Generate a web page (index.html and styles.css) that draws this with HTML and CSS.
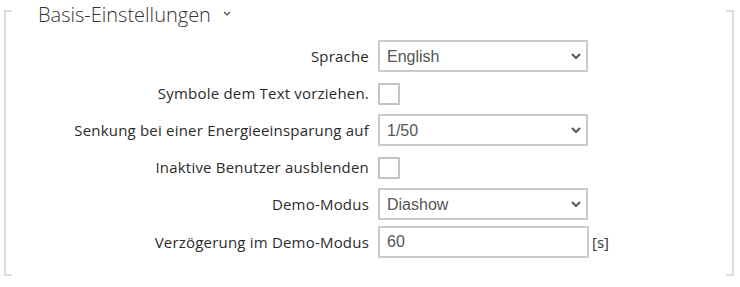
FILE: index.html
```html
<!DOCTYPE html>
<html>

<head>
    <meta charset="utf-8" />
    <title>Basis-Einstellungen</title>
    <link rel="stylesheet" href="styles.css">
</head>

<body>
    <div class="section">
        <h2 class="section-title">
            Basis-Einstellungen
            <svg class="title-chevron" width="8" height="5" viewBox="0 0 8 5">
                <path d="M1 1 L4 4 L7 1" fill="none" stroke="#444" stroke-width="1.2" />
            </svg>
        </h2>

        <div class="form">
            <div class="row">
                <label class="label">Sprache</label>
                <div class="select-wrap">
                    <select class="select">
                        <option>English</option>
                        <option>Deutsch</option>
                    </select>
                    <svg class="select-arrow" width="10" height="6" viewBox="0 0 10 6">
                        <path d="M1 1 L5 5 L9 1" fill="none" stroke="#555" stroke-width="2" />
                    </svg>
                </div>
            </div>
            <div class="row row-check">
                <label class="label">Symbole dem Text vorziehen.</label>
                <input class="check" type="checkbox">
            </div>
            <div class="row">
                <label class="label">Senkung bei einer Energieeinsparung auf</label>
                <div class="select-wrap">
                    <select class="select">
                        <option>1/50</option>
                    </select>
                    <svg class="select-arrow" width="10" height="6" viewBox="0 0 10 6">
                        <path d="M1 1 L5 5 L9 1" fill="none" stroke="#555" stroke-width="2" />
                    </svg>
                </div>
            </div>
            <div class="row row-check">
                <label class="label">Inaktive Benutzer ausblenden</label>
                <input class="check" type="checkbox">
            </div>
            <div class="row">
                <label class="label">Demo-Modus</label>
                <div class="select-wrap">
                    <select class="select">
                        <option>Diashow</option>
                    </select>
                    <svg class="select-arrow" width="10" height="6" viewBox="0 0 10 6">
                        <path d="M1 1 L5 5 L9 1" fill="none" stroke="#555" stroke-width="2" />
                    </svg>
                </div>
            </div>
            <div class="row">
                <label class="label">Verzögerung im Demo-Modus</label>
                <input class="text" type="text" value="60">
                <span class="unit">[s]</span>
            </div>
        </div>
    </div>
</body>

</html>
```

FILE: styles.css
```css
body,
h2 {
    margin: 0;
    padding: 0;
}

body {
    background: #fff;
    font-family: "Open Sans", Lato, sans-serif;
    color: #333;
}

/* bracket frame: side borders plus short ticks at the corners */
.section {
    display: flow-root;
    width: 726px;
    height: 266px;
    margin: 10px 0 0 4px;
    border-left: 2px solid #ddd;
    border-right: 2px solid #ddd;
    background:
        linear-gradient(#ddd, #ddd) left top / 6px 2px no-repeat,
        linear-gradient(#ddd, #ddd) right top / 6px 2px no-repeat,
        linear-gradient(#ddd, #ddd) left bottom / 6px 2px no-repeat,
        linear-gradient(#ddd, #ddd) right bottom / 6px 2px no-repeat;
}

.section-title {
    display: flex;
    align-items: center;
    gap: 12px;
    margin-top: -10px;
    padding-left: 32px;
    height: 28px;
    font-size: 20px;
    font-weight: 300;
    color: #333;
}

.title-chevron {
    margin-top: -2px;
}

.form {
    margin-top: 12px;
}

.row {
    display: grid;
    grid-template-columns: 363px 210px auto;
    column-gap: 9px;
    align-items: center;
    min-height: 32px;
    margin-bottom: 6px;
}

.row-check {
    min-height: 30px;
}

.label {
    text-align: right;
    font-size: 15px;
    letter-spacing: 0.2px;
    color: #2b2b2b;
}

.select-wrap {
    position: relative;
    height: 32px;
}

.select,
.text {
    box-sizing: border-box;
    width: 210px;
    height: 32px;
    margin: 0;
    padding: 0 7px;
    border: 2px solid #ccc;
    border-radius: 0;
    background: #fff;
    font: 16px "Liberation Sans", Arial, sans-serif;
    color: #555;
    outline: none;
}

.select {
    appearance: none;
    -webkit-appearance: none;
}

.select-arrow {
    position: absolute;
    right: 7px;
    top: 13px;
    pointer-events: none;
}

.text {
    width: 211px;
}

.check {
    appearance: none;
    -webkit-appearance: none;
    box-sizing: border-box;
    width: 22px;
    height: 22px;
    margin: 2px 0 0;
    border: 2px solid #c4c4c4;
    background: #fff;
}

.unit {
    font-size: 15px;
    color: #333;
    margin-left: -5px;
}
```
